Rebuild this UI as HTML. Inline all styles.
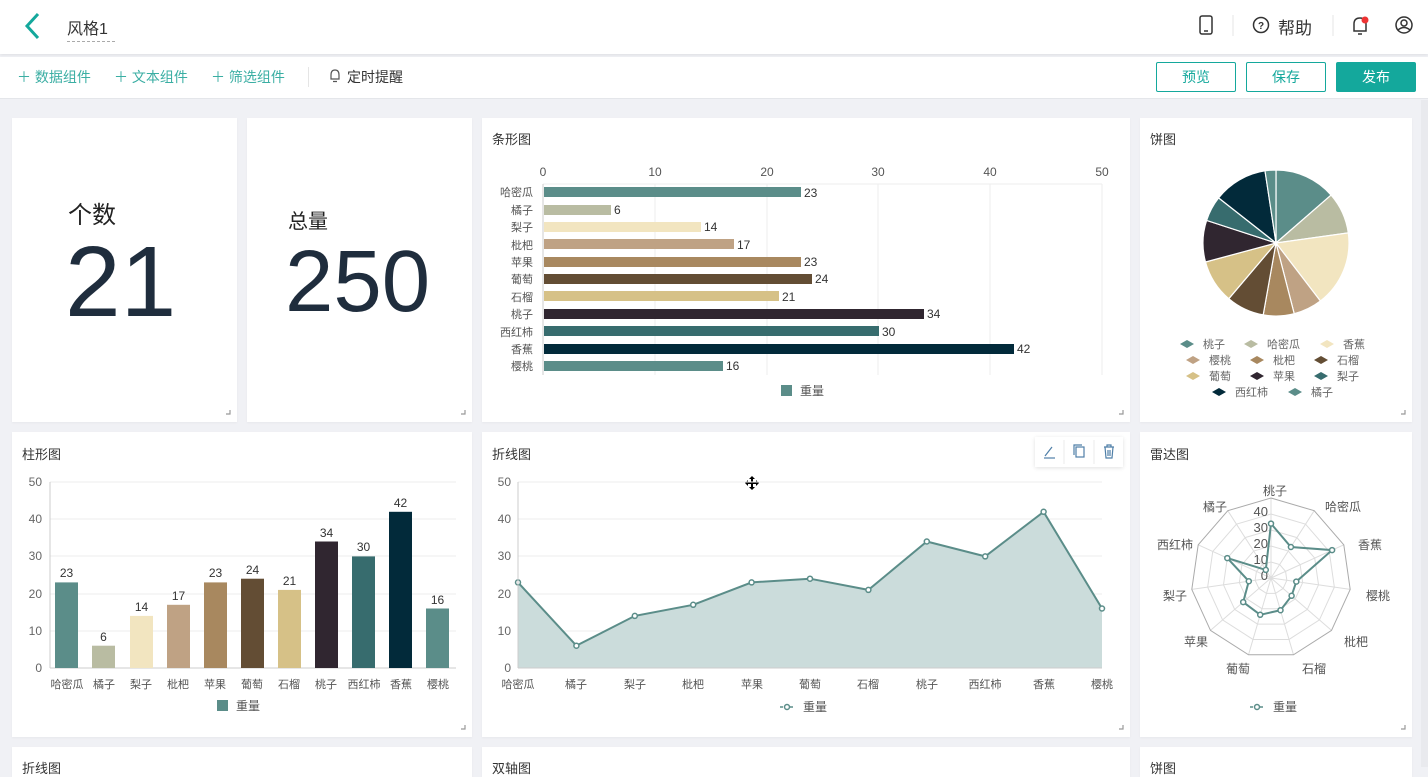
<!DOCTYPE html>
<html><head><meta charset="utf-8"><style>
*{margin:0;padding:0;box-sizing:border-box}
body{width:1428px;height:767px;overflow:hidden;background:#f0f1f5;font-family:"Liberation Sans","Noto Sans CJK SC",sans-serif;position:relative}
.hdr{position:absolute;left:0;top:0;width:1428px;height:54px;background:#fff;box-shadow:0 1px 3px rgba(0,0,0,.08)}
.tb{position:absolute;left:0;top:57px;width:1428px;height:42px;background:#fff;border-bottom:1px solid #e4e6ea}
.card{position:absolute;background:#fff;box-shadow:0 1px 2px rgba(0,0,0,.04)}
.t{position:absolute;font-size:13px;color:#333}
.btn{position:absolute;top:62px;width:80px;height:30px;border:1px solid #14a89c;color:#14a89c;font-size:14px;text-align:center;line-height:28px;border-radius:2px;background:#fff}
.add{position:absolute;top:67px;font-size:14px;color:#3aaea3}
</style></head><body>
<div class="hdr"></div>
<svg style="position:absolute;left:22px;top:12px" width="20" height="28"><path d="M16 2 L5 14 L16 26" fill="none" stroke="#14a89c" stroke-width="3"/></svg>
<div style="position:absolute;left:67px;top:15px;font-size:16px;color:#333;border-bottom:1px dashed #aaa;padding-bottom:2px;width:48px">风格1</div>
<svg style="position:absolute;left:1196px;top:14px" width="220" height="24">
<rect x="4" y="2" width="12" height="18" rx="2" fill="none" stroke="#333" stroke-width="1.5"/><line x1="8" y1="17" x2="12" y2="17" stroke="#333" stroke-width="1.5"/>
<line x1="37" y1="1" x2="37" y2="22" stroke="#e5e5e5"/>
<circle cx="65" cy="11" r="7.5" fill="none" stroke="#333" stroke-width="1.5"/><text x="65" y="15" font-size="10" text-anchor="middle" fill="#333" font-weight="bold">?</text>
<line x1="137" y1="1" x2="137" y2="22" stroke="#e5e5e5"/>
<path d="M158 17 L158 10 Q158 4 164 4 Q170 4 170 10 L170 17 Z M162 20 L166 20" fill="none" stroke="#333" stroke-width="1.5"/><circle cx="169" cy="6" r="3.5" fill="#e33"/>
<circle cx="208" cy="11" r="8" fill="none" stroke="#333" stroke-width="1.5"/><circle cx="208" cy="9" r="3" fill="none" stroke="#333" stroke-width="1.5"/><path d="M202 16 Q208 11 214 16" fill="none" stroke="#333" stroke-width="1.5"/>
</svg>
<div style="position:absolute;left:1278px;top:14px;font-size:17px;color:#333">帮助</div>
<div class="tb"></div>
<div class="add" style="left:17px">＋ 数据组件</div>
<div class="add" style="left:114px">＋ 文本组件</div>
<div class="add" style="left:211px">＋ 筛选组件</div>
<div style="position:absolute;left:308px;top:67px;width:1px;height:20px;background:#e5e5e5"></div>
<svg style="position:absolute;left:329px;top:69px" width="12" height="14"><path d="M2 10 L2 6 Q2 1 6 1 Q10 1 10 6 L10 10 Z M4 12.5 L8 12.5" fill="none" stroke="#555" stroke-width="1.2"/></svg>
<div style="position:absolute;left:347px;top:67px;font-size:14px;color:#333">定时提醒</div>
<div class="btn" style="left:1156px">预览</div>
<div class="btn" style="left:1246px">保存</div>
<div class="btn" style="left:1336px;background:#14a89c;color:#fff">发布</div>
<div style="position:absolute;left:1421px;top:100px;width:7px;height:667px;background:#e9eaee"></div>

<div class="card" style="left:12px;top:118px;width:225px;height:304px"></div>
<div class="card" style="left:247px;top:118px;width:225px;height:304px"></div>
<div class="card" style="left:482px;top:118px;width:648px;height:304px"></div>
<div class="card" style="left:1140px;top:118px;width:272px;height:304px"></div>
<div class="card" style="left:12px;top:432px;width:460px;height:305px"></div>
<div class="card" style="left:482px;top:432px;width:648px;height:305px"></div>
<div class="card" style="left:1140px;top:432px;width:272px;height:305px"></div>
<div class="card" style="left:12px;top:747px;width:460px;height:30px"></div>
<div class="card" style="left:482px;top:747px;width:648px;height:30px"></div>
<div class="card" style="left:1140px;top:747px;width:272px;height:30px"></div>

<div style="position:absolute;left:68px;top:195px;font-size:24px;color:#222">个数</div>
<div style="position:absolute;left:65px;top:232px;font-size:100px;color:#1f2d3d;line-height:1">21</div>
<div style="position:absolute;left:288px;top:205px;font-size:20px;color:#222">总量</div>
<div style="position:absolute;left:285px;top:238px;font-size:87px;color:#1f2d3d;line-height:1">250</div>

<div class="t" style="left:492px;top:129px">条形图</div>
<div class="t" style="left:1150px;top:129px">饼图</div>
<div class="t" style="left:22px;top:444px">柱形图</div>
<div class="t" style="left:492px;top:444px">折线图</div>
<div class="t" style="left:1150px;top:444px">雷达图</div>
<div class="t" style="left:22px;top:758px">折线图</div>
<div class="t" style="left:492px;top:758px">双轴图</div>
<div class="t" style="left:1150px;top:758px">饼图</div>

<div style="position:absolute;left:1035px;top:437px;width:88px;height:30px;background:#fff;box-shadow:0 1px 4px rgba(0,0,0,.12)"></div>
<svg style="position:absolute;left:0;top:0" width="1428" height="767" font-family="Liberation Sans, Noto Sans CJK SC, sans-serif">
<!-- toolbar icons -->
<g stroke="#4f7fa8" fill="none" stroke-width="1.2">
<path d="M1045 456 L1052 447"/><line x1="1044" y1="458" x2="1055" y2="458"/>
<line x1="1064" y1="440" x2="1064" y2="464" stroke="#eee"/><line x1="1094" y1="440" x2="1094" y2="464" stroke="#eee"/>
<rect x="1076" y="447" width="8" height="10"/><path d="M1074 455 L1074 445 L1082 445"/>
<path d="M1104 447 L1114 447 M1107 447 L1107 445 L1111 445 L1111 447 M1105 447 L1106 458 L1112 458 L1113 447 M1108 450 L1108 456 M1110 450 L1110 456"/>
</g>
<path d="M752 477 L752 489 M746 483 L758 483" stroke="#000" stroke-width="2"/><path d="M749 479 L752 476 L755 479 Z M749 487 L752 490 L755 487 Z M748 480 L745 483 L748 486Z M756 480 L759 483 L756 486Z" fill="#000"/>
<!-- corners -->
<g stroke="#999" stroke-width="1.2" fill="none">
<path d="M226 414 L230 414 L230 410"/><path d="M461 414 L465 414 L465 410"/><path d="M1119 414 L1123 414 L1123 410"/><path d="M1401 414 L1405 414 L1405 410"/>
<path d="M461 729 L465 729 L465 725"/><path d="M1119 729 L1123 729 L1123 725"/><path d="M1401 729 L1405 729 L1405 725"/>
</g>
<!-- bar chart -->
<g font-size="12" fill="#555" text-anchor="middle">
<text x="543" y="176">0</text><text x="655" y="176">10</text><text x="767" y="176">20</text><text x="878" y="176">30</text><text x="990" y="176">40</text><text x="1102" y="176">50</text></g>
<g stroke="#eee"><line x1="655" y1="184" x2="655" y2="375"/><line x1="767" y1="184" x2="767" y2="375"/><line x1="878" y1="184" x2="878" y2="375"/><line x1="990" y1="184" x2="990" y2="375"/><line x1="1102" y1="184" x2="1102" y2="375"/><line x1="543" y1="184" x2="1102" y2="184"/></g>
<line x1="543" y1="184" x2="543" y2="375" stroke="#ccc"/>
<g font-size="11" fill="#555" text-anchor="end">
<text x="533" y="196">哈密瓜</text><text x="533" y="214">橘子</text><text x="533" y="231">梨子</text><text x="533" y="249">枇杷</text><text x="533" y="266">苹果</text><text x="533" y="283">葡萄</text><text x="533" y="301">石榴</text><text x="533" y="318">桃子</text><text x="533" y="336">西红柿</text><text x="533" y="353">香蕉</text><text x="533" y="370">樱桃</text></g>
<rect x="544" y="187" width="257" height="10" fill="#5b8d89"/>
<rect x="544" y="205" width="67" height="10" fill="#b9bca2"/>
<rect x="544" y="222" width="157" height="10" fill="#f2e5c0"/>
<rect x="544" y="239" width="190" height="10" fill="#bfa284"/>
<rect x="544" y="257" width="257" height="10" fill="#a8885f"/>
<rect x="544" y="274" width="268" height="10" fill="#634d34"/>
<rect x="544" y="291" width="235" height="10" fill="#d6c187"/>
<rect x="544" y="309" width="380" height="10" fill="#302630"/>
<rect x="544" y="326" width="335" height="10" fill="#376c6e"/>
<rect x="544" y="344" width="470" height="10" fill="#022a3a"/>
<rect x="544" y="361" width="179" height="10" fill="#5b8d89"/>
<g font-size="12" fill="#333">
<text x="804" y="197">23</text><text x="614" y="214">6</text><text x="704" y="231">14</text><text x="737" y="249">17</text><text x="804" y="266">23</text><text x="815" y="283">24</text><text x="782" y="301">21</text><text x="927" y="318">34</text><text x="882" y="336">30</text><text x="1017" y="353">42</text><text x="726" y="370">16</text></g>
<rect x="781" y="385" width="11" height="11" fill="#5b8d89"/><text x="800" y="395" font-size="12" fill="#555">重量</text>
<!-- pie -->
<g stroke="#fff" stroke-width="1.2">
<path d="M1276 243 L1276 170 A73 73 0 0 1 1331.1 195.1Z" fill="#5b8d89"/>
<path d="M1276 243 L1331.1 195.1 A73 73 0 0 1 1348.3 232.9Z" fill="#b9bca2"/>
<path d="M1276 243 L1348.3 232.9 A73 73 0 0 1 1320.4 301Z" fill="#f2e5c0"/>
<path d="M1276 243 L1320.4 301 A73 73 0 0 1 1294.2 313.7Z" fill="#bfa284"/>
<path d="M1276 243 L1294.2 313.7 A73 73 0 0 1 1263.2 314.9Z" fill="#a8885f"/>
<path d="M1276 243 L1263.2 314.9 A73 73 0 0 1 1228.8 298.7Z" fill="#634d34"/>
<path d="M1276 243 L1228.8 298.7 A73 73 0 0 1 1205.5 262Z" fill="#d6c187"/>
<path d="M1276 243 L1205.5 262 A73 73 0 0 1 1206.6 220.4Z" fill="#302630"/>
<path d="M1276 243 L1206.6 220.4 A73 73 0 0 1 1218.6 197.9Z" fill="#376c6e"/>
<path d="M1276 243 L1218.6 197.9 A73 73 0 0 1 1265 170.8Z" fill="#022a3a"/>
<path d="M1276 243 L1265 170.8 A73 73 0 0 1 1276 170Z" fill="#5b8d89"/>
</g>
<g font-size="11" fill="#666">
<path d="M1180 344 l7 -4 l7 4 l-7 4Z" fill="#5b8d89"/><text x="1203" y="348">桃子</text>
<path d="M1244 344 l7 -4 l7 4 l-7 4Z" fill="#b9bca2"/><text x="1267" y="348">哈密瓜</text>
<path d="M1320 344 l7 -4 l7 4 l-7 4Z" fill="#f2e5c0"/><text x="1343" y="348">香蕉</text>
<path d="M1186 360 l7 -4 l7 4 l-7 4Z" fill="#bfa284"/><text x="1209" y="364">樱桃</text>
<path d="M1250 360 l7 -4 l7 4 l-7 4Z" fill="#a8885f"/><text x="1273" y="364">枇杷</text>
<path d="M1314 360 l7 -4 l7 4 l-7 4Z" fill="#634d34"/><text x="1337" y="364">石榴</text>
<path d="M1186 376 l7 -4 l7 4 l-7 4Z" fill="#d6c187"/><text x="1209" y="380">葡萄</text>
<path d="M1250 376 l7 -4 l7 4 l-7 4Z" fill="#302630"/><text x="1273" y="380">苹果</text>
<path d="M1314 376 l7 -4 l7 4 l-7 4Z" fill="#376c6e"/><text x="1337" y="380">梨子</text>
<path d="M1212 392 l7 -4 l7 4 l-7 4Z" fill="#022a3a"/><text x="1235" y="396">西红柿</text>
<path d="M1288 392 l7 -4 l7 4 l-7 4Z" fill="#5b8d89"/><text x="1311" y="396">橘子</text>
</g>
<!-- column chart -->
<g stroke="#eee"><line x1="50" y1="482" x2="456" y2="482"/><line x1="50" y1="519" x2="456" y2="519"/><line x1="50" y1="556" x2="456" y2="556"/><line x1="50" y1="594" x2="456" y2="594"/><line x1="50" y1="631" x2="456" y2="631"/></g>
<line x1="50" y1="668" x2="456" y2="668" stroke="#ccc"/><line x1="50" y1="482" x2="50" y2="668" stroke="#ccc"/>
<g font-size="12" fill="#666" text-anchor="end"><text x="42" y="486">50</text><text x="42" y="523">40</text><text x="42" y="560">30</text><text x="42" y="598">20</text><text x="42" y="635">10</text><text x="42" y="672">0</text></g>
<rect x="55" y="582.4" width="23" height="85.6" fill="#5b8d89"/>
<rect x="92" y="645.7" width="23" height="22.3" fill="#b9bca2"/>
<rect x="130" y="615.9" width="23" height="52.1" fill="#f2e5c0"/>
<rect x="167" y="604.8" width="23" height="63.2" fill="#bfa284"/>
<rect x="204" y="582.4" width="23" height="85.6" fill="#a8885f"/>
<rect x="241" y="578.7" width="23" height="89.3" fill="#634d34"/>
<rect x="278" y="589.9" width="23" height="78.1" fill="#d6c187"/>
<rect x="315" y="541.5" width="23" height="126.5" fill="#302630"/>
<rect x="352" y="556.4" width="23" height="111.6" fill="#376c6e"/>
<rect x="389" y="511.8" width="23" height="156.2" fill="#022a3a"/>
<rect x="426" y="608.5" width="23" height="59.5" fill="#5b8d89"/>
<g font-size="12" fill="#333" text-anchor="middle">
<text x="66.5" y="577">23</text><text x="103.5" y="641">6</text><text x="141.5" y="611">14</text><text x="178.5" y="600">17</text><text x="215.5" y="577">23</text><text x="252.5" y="574">24</text><text x="289.5" y="585">21</text><text x="326.5" y="537">34</text><text x="363.5" y="551">30</text><text x="400.5" y="507">42</text><text x="437.5" y="604">16</text></g>
<g font-size="11" fill="#555" text-anchor="middle">
<text x="67" y="688">哈密瓜</text><text x="104" y="688">橘子</text><text x="141" y="688">梨子</text><text x="178" y="688">枇杷</text><text x="215" y="688">苹果</text><text x="252" y="688">葡萄</text><text x="289" y="688">石榴</text><text x="326" y="688">桃子</text><text x="364" y="688">西红柿</text><text x="401" y="688">香蕉</text><text x="438" y="688">樱桃</text></g>
<rect x="217" y="700" width="11" height="11" fill="#5b8d89"/><text x="236" y="710" font-size="12" fill="#555">重量</text>
<!-- line chart -->
<g stroke="#eee"><line x1="518" y1="482" x2="1102" y2="482"/><line x1="518" y1="519" x2="1102" y2="519"/><line x1="518" y1="556" x2="1102" y2="556"/><line x1="518" y1="594" x2="1102" y2="594"/><line x1="518" y1="631" x2="1102" y2="631"/></g>
<g font-size="12" fill="#666" text-anchor="end"><text x="511" y="486">50</text><text x="511" y="523">40</text><text x="511" y="560">30</text><text x="511" y="598">20</text><text x="511" y="635">10</text><text x="511" y="672">0</text></g>
<path d="M518 668 L518 582.4 L576.4 645.7 L634.8 615.9 L693.2 604.8 L751.6 582.4 L810 578.7 L868.4 589.9 L926.8 541.5 L985.2 556.4 L1043.6 511.8 L1102 608.5 L1102 668Z" fill="#cbdcdb"/>
<path d="M518 582.4 L576.4 645.7 L634.8 615.9 L693.2 604.8 L751.6 582.4 L810 578.7 L868.4 589.9 L926.8 541.5 L985.2 556.4 L1043.6 511.8 L1102 608.5" fill="none" stroke="#5b8d89" stroke-width="2"/>
<g fill="#fff" stroke="#5b8d89" stroke-width="1.5"><circle cx="518" cy="582.4" r="2.5"/><circle cx="576.4" cy="645.7" r="2.5"/><circle cx="634.8" cy="615.9" r="2.5"/><circle cx="693.2" cy="604.8" r="2.5"/><circle cx="751.6" cy="582.4" r="2.5"/><circle cx="810" cy="578.7" r="2.5"/><circle cx="868.4" cy="589.9" r="2.5"/><circle cx="926.8" cy="541.5" r="2.5"/><circle cx="985.2" cy="556.4" r="2.5"/><circle cx="1043.6" cy="511.8" r="2.5"/><circle cx="1102" cy="608.5" r="2.5"/></g>
<line x1="518" y1="668" x2="1102" y2="668" stroke="#ccc"/><line x1="518" y1="482" x2="518" y2="668" stroke="#ccc"/>
<g font-size="11" fill="#555" text-anchor="middle">
<text x="518" y="688">哈密瓜</text><text x="576" y="688">橘子</text><text x="635" y="688">梨子</text><text x="693" y="688">枇杷</text><text x="752" y="688">苹果</text><text x="810" y="688">葡萄</text><text x="868" y="688">石榴</text><text x="927" y="688">桃子</text><text x="985" y="688">西红柿</text><text x="1044" y="688">香蕉</text><text x="1102" y="688">樱桃</text></g>
<line x1="780" y1="707" x2="794" y2="707" stroke="#5b8d89" stroke-width="1.5" stroke-dasharray="3,2"/><circle cx="787" cy="707" r="2.5" fill="#fff" stroke="#5b8d89" stroke-width="1.5"/><text x="803" y="711" font-size="12" fill="#555">重量</text>
<!-- radar -->
<g transform="translate(1271,578)">
<g fill="none" stroke="#ddd" vector-effect="non-scaling-stroke">
<polygon transform="scale(0.8)" points="0,-80 43.2,-67.3 72.8,-33.2 79.2,11.4 60.5,52.4 22.5,76.8 -22.5,76.8 -60.5,52.4 -79.2,11.4 -72.8,-33.2 -43.2,-67.3" vector-effect="non-scaling-stroke"/>
<polygon transform="scale(0.6)" points="0,-80 43.2,-67.3 72.8,-33.2 79.2,11.4 60.5,52.4 22.5,76.8 -22.5,76.8 -60.5,52.4 -79.2,11.4 -72.8,-33.2 -43.2,-67.3" vector-effect="non-scaling-stroke"/>
<polygon transform="scale(0.4)" points="0,-80 43.2,-67.3 72.8,-33.2 79.2,11.4 60.5,52.4 22.5,76.8 -22.5,76.8 -60.5,52.4 -79.2,11.4 -72.8,-33.2 -43.2,-67.3" vector-effect="non-scaling-stroke"/>
<polygon transform="scale(0.2)" points="0,-80 43.2,-67.3 72.8,-33.2 79.2,11.4 60.5,52.4 22.5,76.8 -22.5,76.8 -60.5,52.4 -79.2,11.4 -72.8,-33.2 -43.2,-67.3" vector-effect="non-scaling-stroke"/>
<path d="M0 0L0 -80M0 0L43.2 -67.3M0 0L72.8 -33.2M0 0L79.2 11.4M0 0L60.5 52.4M0 0L22.5 76.8M0 0L-22.5 76.8M0 0L-60.5 52.4M0 0L-79.2 11.4M0 0L-72.8 -33.2M0 0L-43.2 -67.3"/>
</g>
<polygon points="0,-80 43.2,-67.3 72.8,-33.2 79.2,11.4 60.5,52.4 22.5,76.8 -22.5,76.8 -60.5,52.4 -79.2,11.4 -72.8,-33.2 -43.2,-67.3" fill="none" stroke="#aaa"/>
<g font-size="13" fill="#555" text-anchor="end"><text x="-3" y="-62">40</text><text x="-3" y="-46">30</text><text x="-3" y="-30">20</text><text x="-3" y="-14">10</text><text x="-3" y="2">0</text></g>
<polygon points="0,-54.4 19.9,-31 61.1,-27.9 25.3,3.6 20.6,17.8 9.5,32.2 -10.8,36.8 -27.8,24.1 -22.2,3.2 -43.7,-19.9 -5.2,-8.1" fill="none" stroke="#5b8d89" stroke-width="2"/>
<g fill="#fff" stroke="#5b8d89" stroke-width="1.5"><circle cx="0" cy="-54.4" r="2.5"/><circle cx="19.9" cy="-31" r="2.5"/><circle cx="61.1" cy="-27.9" r="2.5"/><circle cx="25.3" cy="3.6" r="2.5"/><circle cx="20.6" cy="17.8" r="2.5"/><circle cx="9.5" cy="32.2" r="2.5"/><circle cx="-10.8" cy="36.8" r="2.5"/><circle cx="-27.8" cy="24.1" r="2.5"/><circle cx="-22.2" cy="3.2" r="2.5"/><circle cx="-43.7" cy="-19.9" r="2.5"/><circle cx="-5.2" cy="-8.1" r="2.5"/></g>
</g>
<g font-size="12" fill="#555">
<text x="1263" y="495">桃子</text><text x="1325" y="511">哈密瓜</text><text x="1358" y="549">香蕉</text><text x="1366" y="600">樱桃</text><text x="1344" y="646">枇杷</text><text x="1302" y="673">石榴</text>
<text x="1250" y="673" text-anchor="end">葡萄</text><text x="1208" y="646" text-anchor="end">苹果</text><text x="1187" y="600" text-anchor="end">梨子</text><text x="1193" y="549" text-anchor="end">西红柿</text><text x="1227" y="511" text-anchor="end">橘子</text></g>
<line x1="1250" y1="707" x2="1264" y2="707" stroke="#5b8d89" stroke-width="1.5" stroke-dasharray="3,2"/><circle cx="1257" cy="707" r="2.5" fill="#fff" stroke="#5b8d89" stroke-width="1.5"/><text x="1273" y="711" font-size="12" fill="#555">重量</text>
</svg>
</body></html>
